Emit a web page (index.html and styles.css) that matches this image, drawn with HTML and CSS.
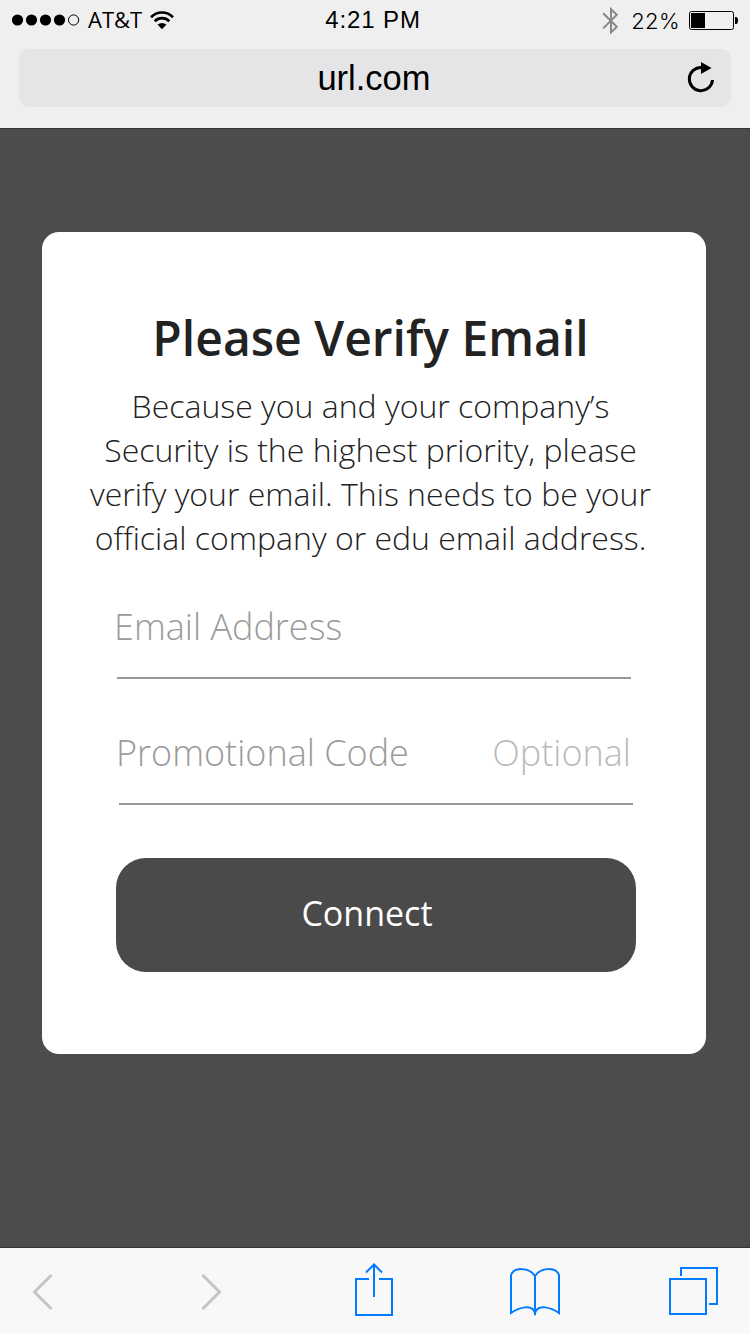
FILE: index.html
```html
<!DOCTYPE html>
<html lang="en">
<head>
<meta charset="utf-8">
<title>Please Verify Email</title>
<link rel="stylesheet" href="styles.css">
</head>
<body>
<div class="screen">
  <header class="browser-top">
    <div class="status">
      <div class="status-left">
        <svg class="dots" width="68" height="12" viewBox="0 0 68 12">
          <circle cx="5.5" cy="6" r="5.6"/><circle cx="19.5" cy="6" r="5.6"/><circle cx="33.5" cy="6" r="5.6"/><circle cx="47.5" cy="6" r="5.6"/>
          <circle cx="61.6" cy="6" r="5.1" fill="none" stroke="#000" stroke-width="1"/>
        </svg>
        <span class="carrier">AT&amp;T</span>
        <svg class="wifi" width="24" height="19" viewBox="0 0 24 19">
          <path d="M1 6.2A15.2 15.2 0 0 1 23 6.2M4.7 10.2A10.3 10.3 0 0 1 19.3 10.2" fill="none" stroke="#000" stroke-width="2.7"/>
          <path d="M7.5 13.6Q12 10.3 16.5 13.6L12 18.2Z"/>
        </svg>
      </div>
      <span class="clock">4:21 PM</span>
      <div class="status-right">
        <svg class="bluetooth" width="17" height="28" viewBox="0 0 17 28">
          <path d="M1.2 6.2L14.8 19.8L9 25.4V2.2L14.8 7.8L1.2 21.4" fill="none" stroke="#888" stroke-width="2"/>
        </svg>
        <span class="percent">22%</span>
        <svg class="battery" width="49" height="20" viewBox="0 0 49 20">
          <rect x=".5" y=".5" width="44" height="18" rx="2" fill="none" stroke="#000"/>
          <rect x="2" y="2" width="14" height="15"/>
          <path d="M46 6h1q2 0 2 3.500t-2 3.500h-1z"/>
        </svg>
      </div>
    </div>
    <div class="address">
      <span class="url">url.com</span>
      <svg class="reload" width="28" height="32" viewBox="0 0 28 32">
        <path d="M14.500 5.500A11.600 11.600 0 1 0 25.500 18" fill="none" stroke="#000" stroke-width="3"/>
        <path d="M14 0L24.500 6L14 12Z"/>
      </svg>
    </div>
  </header>

  <main class="page">
    <section class="card">
      <h1 class="title">Please Verify Email</h1>
      <p class="message">Because you and your company’s<br>Security is the highest priority, please<br>verify your email. This needs to be your<br>official company or edu email address.</p>
      <div class="field field-email"><span class="label">Email Address</span></div>
      <div class="field field-promo"><span class="label">Promotional Code</span><span class="optional">Optional</span></div>
      <button class="connect" type="button">Connect</button>
    </section>
  </main>

  <nav class="toolbar">
    <svg class="back" width="22" height="38" viewBox="0 0 22 38"><path d="M19.500 2L2.500 19L19.500 36" fill="none" stroke="#c4c4c4" stroke-width="3"/></svg>
    <svg class="forward" width="22" height="38" viewBox="0 0 22 38"><path d="M2.500 2L19.500 19L2.500 36" fill="none" stroke="#c4c4c4" stroke-width="3"/></svg>
    <svg class="share" width="38" height="53" viewBox="0 0 38 53"><path d="M14 16H1V52H37V16H24M19 34V1.500M11 9.500L19 1.500L27 9.500" fill="none" stroke="#007aff" stroke-width="2"/></svg>
    <svg class="book" width="50" height="48" viewBox="0 0 50 48"><path d="M25 8C19-1 4-1 1 7V45C9 39.500 22 35.500 25 45C28 35.500 41 39.500 49 45V7C46-1 31-1 25 8V47" fill="none" stroke="#007aff" stroke-width="2"/></svg>
    <svg class="tabs" width="49" height="48" viewBox="0 0 49 48"><path d="M1 12H37V47H1ZM12 9V1H48V37H40" fill="none" stroke="#007aff" stroke-width="2"/></svg>
  </nav>
</div>
</body>
</html>
```

FILE: styles.css
```css
* { box-sizing: border-box; }
body { margin: 0; font-family: "Open Sans", sans-serif; }
svg { display: block; flex: none; }

.screen { display: flex; flex-direction: column; width: 750px; height: 1334px; overflow: hidden; }

.browser-top { height: 129px; flex: none; background: #efefef; border-bottom: 1px solid #363636; color: #000; }
.status { display: grid; grid-template-columns: 1fr auto 1fr; height: 49px; line-height: 40px; white-space: nowrap; }
.status-left { display: flex; padding-left: 12px; }
.dots { margin-top: 14px; }
.carrier { margin-left: 8px; font-size: 22px; line-height: 39px; }
.wifi { margin: 11px 0 0 8px; }
.clock { margin-right: 4px; font: 24px/40px "Liberation Sans", Arial, sans-serif; letter-spacing: .9px; }
.status-right { display: flex; justify-content: flex-end; padding-right: 12px; }
.bluetooth { margin-top: 7px; }
.percent { margin-left: 12px; font: 300 22px/42px Inter, sans-serif; letter-spacing: .4px; }
.battery { margin: 11px 0 0 9px; }

.address { display: grid; grid-template-columns: 1fr auto 1fr; height: 58px; margin: 0 19px; background: #e5e5e7; border-radius: 9px; }
.url { grid-column: 2; margin-right: 2px; font: 34.5px/58px "Liberation Sans", Arial, sans-serif; }
.reload { justify-self: end; margin: 13px 16px 0 0; }

.page { flex: 1; padding: 103px 44px 0 42px; background: #4c4c4c; }
.card { height: 822px; padding: 74px 70px 0 74px; background: #fff; border-radius: 17px; }
.title { margin: 0 -20px 14px -31px; font-size: 48px; line-height: 64px; font-weight: 600; color: #222; text-align: center; white-space: nowrap; }
.message { margin: 0 -40px 0 -51px; font-size: 32px; line-height: 44px; font-weight: 300; color: #222; text-align: center; white-space: nowrap; }
.field { display: flex; justify-content: space-between; width: 514px; height: 77px; border-bottom: 2px solid #979797; font-size: 36px; line-height: 50px; font-weight: 300; color: #9b9b9b; white-space: nowrap; }
.field-email { margin: 42px 0 49px 1px; }
.field-email .label { margin-left: -3px; }
.field-promo { margin: 0 0 53px 3px; }
.field-promo .label { margin-left: -3px; }
.optional { margin-right: 2px; color: #bababa; }
.connect { display: block; width: 520px; height: 114px; padding: 0 18px 3px 0; border: 0; border-radius: 30px; background: #4a4a4a; color: #fff; font: 400 34px/47px "Open Sans", sans-serif; }

.toolbar { display: flex; flex: none; height: 87px; background: #f8f8f8; border-top: 1px solid #363636; }
.back { margin: 25px 0 0 32px; }
.forward { margin: 25px 0 0 146px; }
.share { margin: 15px 0 0 133px; }
.book { margin: 20px 0 0 117px; }
.tabs { margin: 19px 0 0 109px; }
```
